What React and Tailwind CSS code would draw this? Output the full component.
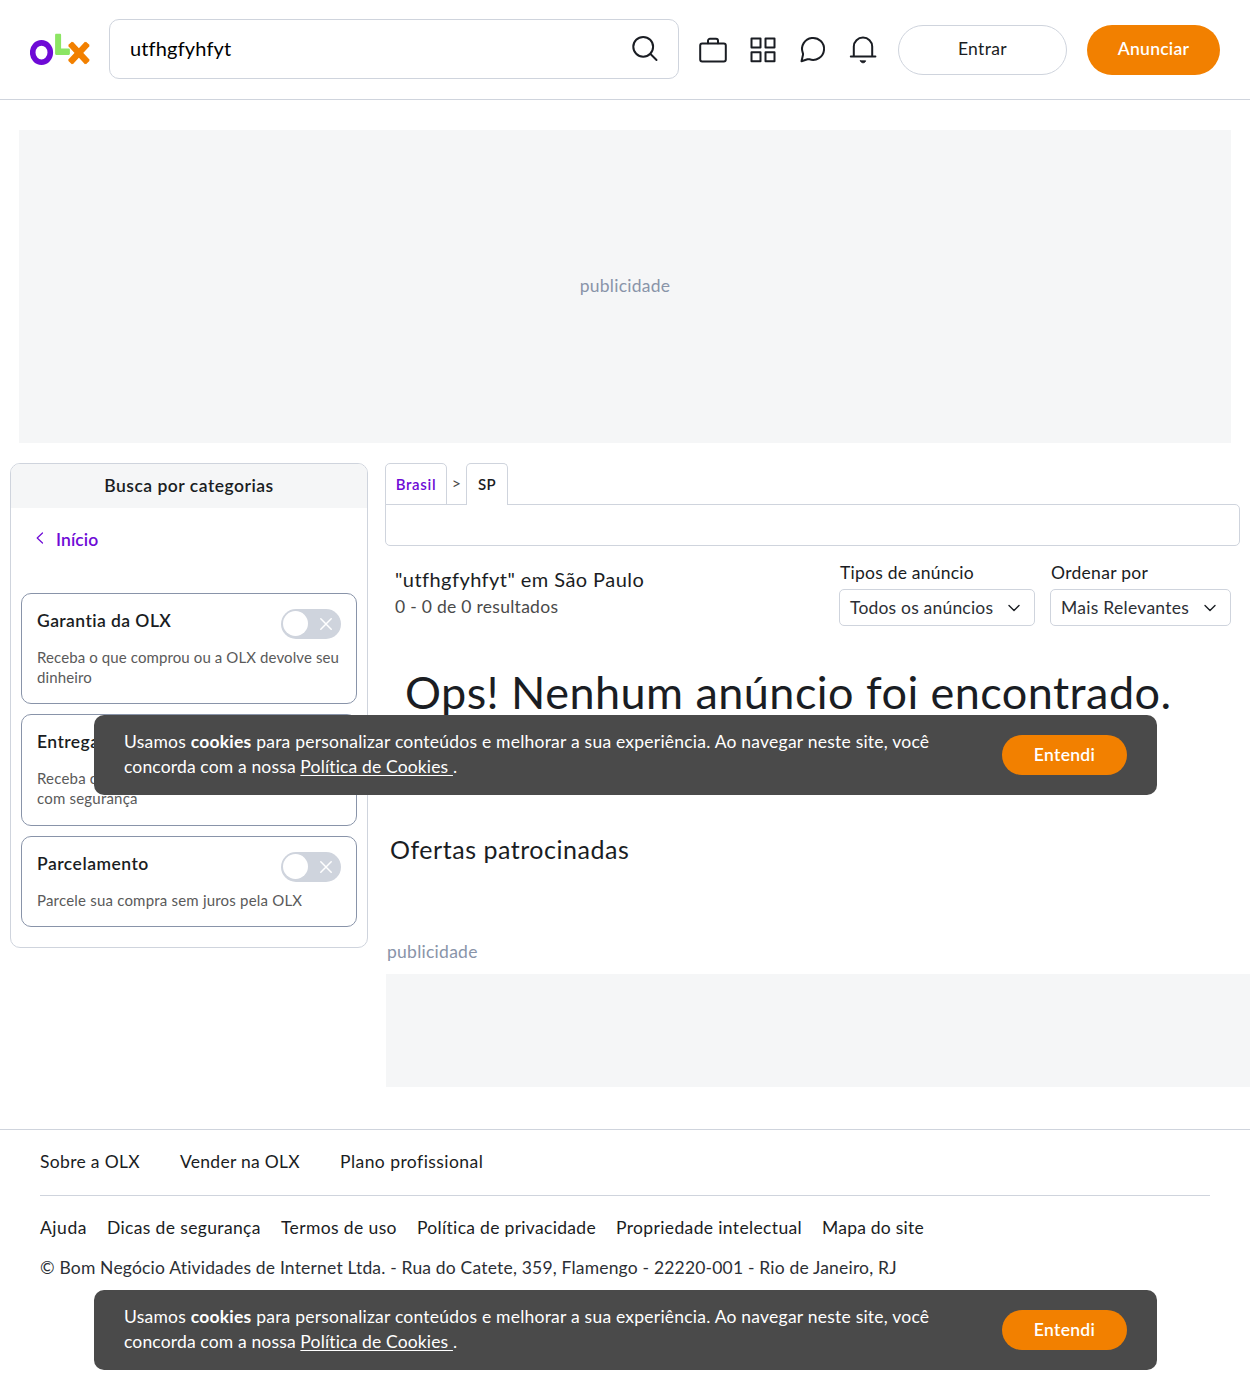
import React from 'react';

function Logo() {
  return (
    <svg className="block h-[34px] w-[62px]" viewBox="0 0 62 34" fill="none" aria-label="OLX">
      <ellipse cx="11.500" cy="19.600" rx="8.800" ry="9.700" stroke="#6e0ad6" strokeWidth="5.600" />
      <path d="M26.300.7h3.600c.7 0 1.200.5 1.200 1.200v13.600h7.600c.7 0 1.200.5 1.200 1.200v4c0 .7-.5 1.200-1.200 1.200H26.300c-.7 0-1.200-.5-1.200-1.200V1.900c0-.7.5-1.200 1.200-1.200z" fill="#8ce563" />
      <path d="M40.800 11.200L57 28.700M57 11.200L40.800 28.700" stroke="#f28000" strokeWidth="5" />
      <path d="M40.500 10.900L57.300 29M57.300 10.900L40.500 29" stroke="#f28000" strokeWidth="6.400" />
      <path d="M40 10.400L57.800 29.500M57.800 10.400L40 29.500" stroke="#f28000" strokeWidth="5" />
    </svg>
  );
}

const stroke = {
  fill: 'none',
  stroke: '#1a1d23',
  strokeWidth: 2,
  strokeLinecap: 'round',
  strokeLinejoin: 'round',
};

function SearchIcon() {
  return (
    <svg className="size-[30px]" viewBox="0 0 30 30" {...stroke}>
      <circle cx="13.200" cy="12.800" r="9.900" />
      <path d="M20.500 20L26.500 26" />
    </svg>
  );
}

function BriefcaseIcon() {
  return (
    <svg className="size-[30px]" viewBox="0 0 30 30" {...stroke}>
      <rect x="2.200" y="8.500" width="25.600" height="18" rx="2" />
      <path d="M10 8.200V5.800C10 4.700 10.900 3.800 12 3.800h6c1.100 0 2 .9 2 2v2.400" />
    </svg>
  );
}

function GridIcon() {
  return (
    <svg className="size-[30px]" viewBox="0 0 30 30" {...stroke}>
      <rect x="3.500" y="3.500" width="9" height="9" />
      <rect x="17.500" y="3.500" width="9" height="9" />
      <rect x="3.500" y="17.300" width="9" height="9" />
      <rect x="17.500" y="17.300" width="9" height="9" />
    </svg>
  );
}

function ChatIcon() {
  return (
    <svg className="size-[30px]" viewBox="0 0 30 30" {...stroke}>
      <path d="M3.500 26.300l1.500-6.500c.2-.9 0-1.300-.3-2.200A11 11 0 1 1 11.500 24.300c-.9-.2-1.300-.2-2 0z" />
    </svg>
  );
}

function BellIcon() {
  return (
    <svg className="size-[30px]" viewBox="0 0 30 30" {...stroke}>
      <path d="M2.800 21.500h24.600M5.800 21.200V11.600C5.800 6.500 9.900 2.600 15 2.600s9.200 3.900 9.200 9v9.600" />
      <path d="M12.400 25.800h5.300c-.4 1.400-1.300 2-2.600 2s-2.300-.6-2.700-2z" fill="#1a1d23" strokeWidth="0.800" />
    </svg>
  );
}

function Chevron() {
  return (
    <svg className="h-[8px] w-[12px]" viewBox="0 0 12 8" fill="none" stroke="#1a1d23" strokeWidth="1.400" strokeLinecap="round" strokeLinejoin="round">
      <path d="M1 1.500l5 5 5-5" />
    </svg>
  );
}

function Toggle() {
  return (
    <div className="flex h-[30px] w-[60px] shrink-0 items-center justify-between rounded-full bg-[#cfd4dd] pr-[9px] pl-[2px]">
      <div className="mb-px size-[25px] rounded-full bg-white" />
      <svg className="size-[12px]" viewBox="0 0 12 12" fill="none" stroke="#fff" strokeWidth="1.500" strokeLinecap="round">
        <path d="M.8.8l10.400 10.400M11.200.8L.8 11.200" />
      </svg>
    </div>
  );
}

function FilterCard({ title, titleClass, text, textClass, sizeClass }) {
  return (
    <div className={`rounded-[10px] border border-[#8994a9] px-[15px] pt-[15px] ${sizeClass}`}>
      <div className="flex h-[30px] justify-between">
        <h3 className={`text-[17.5px] leading-[24px] font-semibold ${titleClass}`}>{title}</h3>
        <Toggle />
      </div>
      <p className={`mt-[9px] text-[15px] leading-[19.500px] text-[#5a5a5a] ${textClass}`}>{text}</p>
    </div>
  );
}

function SelectBox({ label, labelClass, value, valueClass, sizeClass }) {
  return (
    <div className={sizeClass}>
      <p className={`text-[17.5px] leading-[26px] ${labelClass}`}>{label}</p>
      <div className="mt-[3px] flex h-[37px] items-center justify-between rounded-[5px] border border-[#cfd4dd] pr-[14px] pl-[10px]">
        <span className={`text-[17.5px] leading-[25px] whitespace-nowrap text-[#2c2f35] ${valueClass}`}>{value}</span>
        <Chevron />
      </div>
    </div>
  );
}

function CookieBar({ placeClass }) {
  return (
    <div className={`absolute left-[94px] flex h-[80px] w-[1063px] items-center justify-between rounded-[10px] bg-[#4a4a4a] pr-[30px] pl-[30px] text-white ${placeClass}`}>
      <p className="pb-[2px] text-[17.5px] leading-[25px]">
        <span className="block tracking-[0.225px] whitespace-nowrap">
          Usamos <b>cookies</b> para personalizar conteúdos e melhorar a sua experiência. Ao navegar neste site, você
        </span>
        <span className="block tracking-[0.150px] whitespace-nowrap">
          concorda com a nossa <span className="underline underline-offset-2">Política de Cookies </span>.
        </span>
      </p>
      <button className="h-[40px] w-[125px] rounded-full bg-[#f28000] text-[17.5px] font-semibold tracking-[0.300px]">Entendi</button>
    </div>
  );
}

export default function App() {
  return (
    <div className="relative h-[1400px] w-[1250px] overflow-hidden bg-white font-['Lato','Noto_Sans',sans-serif] text-[#1a1d23]">
      <header className="flex h-[100px] items-center border-b border-[#cfd4dd] pr-[30px] pl-[30px]">
        <Logo />
        <div className="mb-px ml-[17px] flex h-[60px] w-[570px] items-center justify-between rounded-[10px] border border-[#cfd4dd] pr-[18px] pl-[20px]">
          <span className="mb-[3px] text-[20px] tracking-[0.150px] text-black">utfhgfyhfyt</span>
          <SearchIcon />
        </div>
        <nav className="ml-[19px] flex gap-5">
          <BriefcaseIcon />
          <GridIcon />
          <ChatIcon />
          <BellIcon />
        </nav>
        <button className="ml-[20px] h-[50px] w-[169px] rounded-full border border-[#cfd4dd] text-[17.5px] tracking-[0.350px]">Entrar</button>
        <button className="ml-[20px] h-[50px] w-[133px] rounded-full bg-[#f28000] text-[17.5px] font-semibold tracking-[0.250px] text-white">Anunciar</button>
      </header>

      <div className="mx-[19px] mt-[30px] flex h-[313px] items-center justify-center bg-[#f5f6f7] text-[17.5px] tracking-[0.250px] text-[#8994a9]">
        publicidade
      </div>

      <div className="mt-[20px] flex">
        <aside className="ml-[10px] h-[485px] w-[358px] shrink-0 overflow-hidden rounded-[10px] border border-[#cfd4dd]">
          <h2 className="h-[44px] bg-[#f5f6f7] text-center text-[17.5px] leading-[44px] font-semibold tracking-[0.500px]">Busca por categorias</h2>
          <div className="mt-[20px] flex h-[24px] items-center pl-[25px] text-[#6e0ad6]">
            <svg className="mb-[4px] h-[12px] w-[8px]" viewBox="0 0 8 12" fill="none" stroke="#6e0ad6" strokeWidth="1.200" strokeLinecap="round" strokeLinejoin="round">
              <path d="M6.500 1L1.200 6l5.300 5" />
            </svg>
            <span className="ml-[12px] text-[17.5px] font-semibold tracking-[0.100px]">Início</span>
          </div>
          <div className="mt-[41px] flex flex-col gap-[10px] px-[10px]">
            <FilterCard title="Garantia da OLX" titleClass="tracking-[0.430px]" text="Receba o que comprou ou a OLX devolve seu dinheiro" textClass="tracking-[0.110px]" sizeClass="h-[111px]" />
            <FilterCard title="Entrega da OLX" titleClass="tracking-[0.430px]" text="Receba ou envie seus produtos pela OLX com segurança" textClass="tracking-[0.200px]" sizeClass="h-[112px]" />
            <FilterCard title="Parcelamento" titleClass="tracking-[0.500px]" text="Parcele sua compra sem juros pela OLX" textClass="tracking-[0.200px]" sizeClass="h-[91px]" />
          </div>
        </aside>

        <main className="ml-[17px] flex w-[865px] flex-col">
          <div className="flex h-[42px] text-[15px] font-semibold">
            <div className="h-[42px] w-[62px] rounded-t-[5px] border border-[#cfd4dd] text-center leading-[41px] tracking-[0.700px] text-[#6e0ad6]">Brasil</div>
            <div className="w-[19px] text-center text-[16px] leading-[40px] font-normal text-[#4a4a4a]">&gt;</div>
            <div className="z-10 h-[42px] w-[42px] rounded-t-[5px] border border-b-0 border-[#cfd4dd] bg-white text-center leading-[41px] tracking-[0.400px]">SP</div>
          </div>
          <div className="-mt-px h-[42px] w-[855px] rounded-[5px] rounded-tl-none border border-[#cfd4dd]" />

          <div className="mt-[14px] flex h-[67px]">
            <div className="w-[454px] pt-[6px] pl-[10px]">
              <h1 className="text-[20px] leading-[26px] tracking-[0.440px]">"utfhgfyhfyt" em São Paulo</h1>
              <p className="text-[17.5px] leading-[30px] tracking-[0.280px] text-[#4a4a4a]">0 - 0 de 0 resultados</p>
            </div>
            <SelectBox label="Tipos de anúncio" labelClass="pl-px tracking-[0.230px]" value="Todos os anúncios" valueClass="tracking-[0.190px]" sizeClass="w-[196px]" />
            <SelectBox label="Ordenar por" labelClass="pl-px tracking-[0.300px]" value="Mais Relevantes" valueClass="tracking-[0.280px]" sizeClass="ml-[15px] w-[181px]" />
          </div>

          <h2 className="mt-[38px] pl-[20px] text-[45px] leading-[55px] tracking-[0.440px] whitespace-nowrap">Ops! Nenhum anúncio foi encontrado.</h2>
          <h3 className="mt-[113px] pl-[5px] text-[25px] leading-[32px] tracking-[0.530px]">Ofertas patrocinadas</h3>
          <p className="mt-[75px] pl-[2px] text-[17.5px] leading-[24px] tracking-[0.260px] text-[#8994a9]">publicidade</p>
          <div className="mt-[10px] ml-px h-[113px] bg-[#f5f6f7]" />
        </main>
      </div>

      <footer className="mt-[42px] border-t border-[#cfd4dd] px-[40px] text-[17.5px] leading-[24px]">
        <div className="flex h-[66px] gap-[40px] border-b border-[#cfd4dd] pt-[20px]">
          <a className="w-[100px] tracking-[0.330px] whitespace-nowrap">Sobre a OLX</a>
          <a className="w-[120px] tracking-[0.270px] whitespace-nowrap">Vender na OLX</a>
          <a className="tracking-[0.450px]">Plano profissional</a>
        </div>
        <div className="mt-[20px] flex gap-[20px] whitespace-nowrap">
          <a className="w-[47px] tracking-[0.550px]">Ajuda</a>
          <a className="w-[154px] tracking-[0.360px]">Dicas de segurança</a>
          <a className="w-[116px] tracking-[0.380px]">Termos de uso</a>
          <a className="w-[179px] tracking-[0.310px]">Política de privacidade</a>
          <a className="w-[186px] tracking-[0.360px]">Propriedade intelectual</a>
          <a className="tracking-[0.230px]">Mapa do site</a>
        </div>
        <p className="mt-[16px] tracking-[0.185px] whitespace-nowrap text-[#2c2f35]">
          © Bom Negócio Atividades de Internet Ltda. - Rua do Catete, 359, Flamengo - 22220-001 - Rio de Janeiro, RJ
        </p>
      </footer>

      <CookieBar placeClass="top-[715px] z-20" />
      <CookieBar placeClass="top-[1290px] z-20" />
    </div>
  );
}
